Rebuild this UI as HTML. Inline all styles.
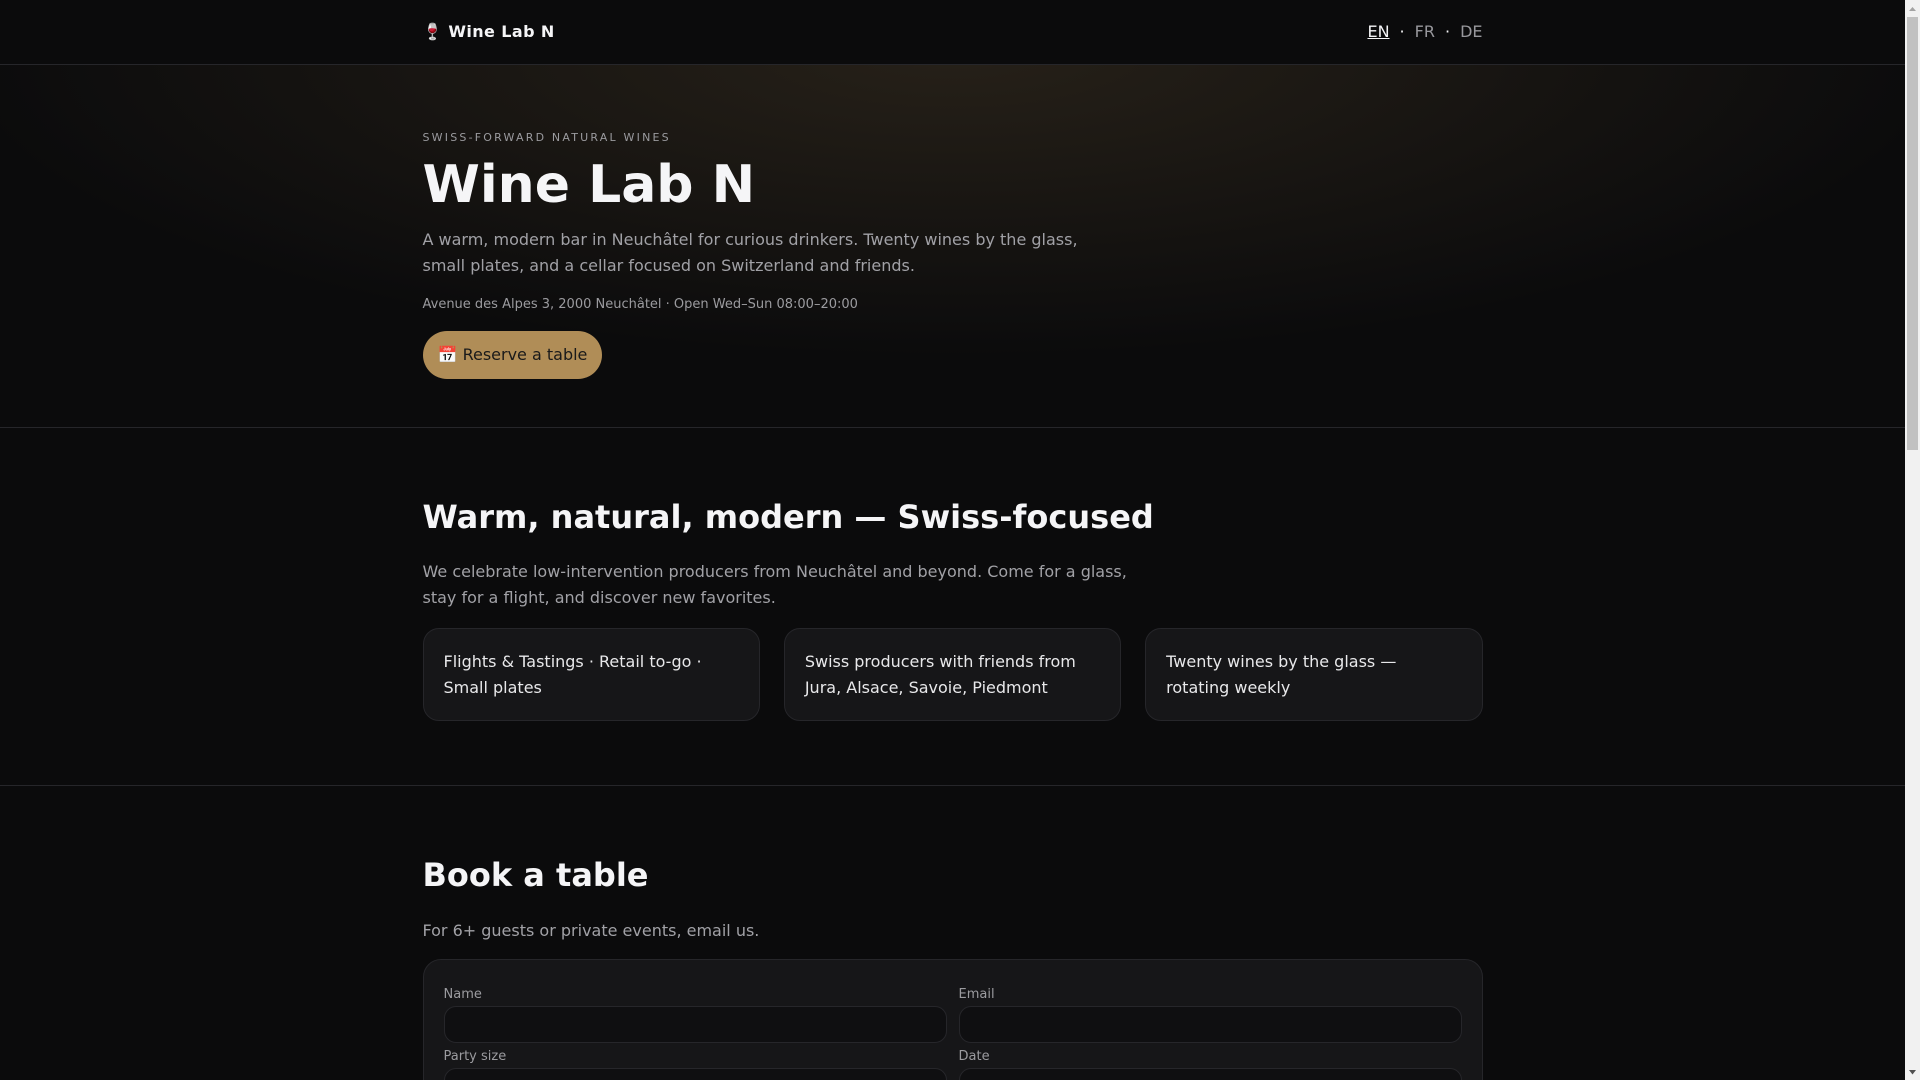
<!DOCTYPE html>
<html lang="en">
<head>
<meta charset="utf-8">
<title>Wine Lab N</title>
<style>
*{box-sizing:border-box}
html,body{margin:0;padding:0;width:1920px;height:1080px;overflow:hidden}
body{background:#0b0b0c;color:#f5f5f7;font-family:"DejaVu Sans",sans-serif;font-size:16px;line-height:1.6;position:relative}
#page{position:absolute;left:0;top:0;width:1905px;height:1080px;overflow:hidden}
.wrap{width:1060px;margin:0 auto;position:relative}
a{color:inherit;text-decoration:none}
header{height:65px;border-bottom:1px solid #26262a;background:#0b0b0c}
header .wrap{height:64px;display:flex;align-items:center;justify-content:space-between}
.brand{font-weight:700;letter-spacing:.4px;font-size:16px;display:flex;gap:5.5px;align-items:center}
.lang{display:flex;gap:10px;font-size:16px;color:#98989d}
.lang .on{color:#f5f5f7;text-decoration:underline}
.lang .dot{color:#f5f5f7}
.hero{height:363px;border-bottom:1px solid #26262a;background:radial-gradient(1000px 310px at 50% -5%,rgba(176,141,87,.17),rgba(176,141,87,0) 100%)}
.eyebrow{position:absolute;top:64px;left:0;font-size:11px;letter-spacing:.2em;color:#9b9b9f;line-height:18px}
h1{position:absolute;top:91px;left:0;margin:0;font-size:52px;line-height:58px;font-weight:700}
.lede{position:absolute;top:162px;left:0;margin:0;width:680px;color:#a1a1a6;font-size:16px;line-height:25.6px}
.addr{position:absolute;top:230px;left:0;margin:0;font-size:13px;line-height:20px;color:#9b9b9f}
.btn{position:absolute;top:266px;left:0;height:48px;width:179px;border-radius:24px;background:#b08d57;color:#1a1a1a;display:flex;align-items:center;justify-content:center;font-size:16px;white-space:pre;padding-left:1px}
section{border-bottom:1px solid #26262a}
h2{margin:0;font-size:32px;line-height:48px;font-weight:700;position:relative;top:1px}
section p{margin:0;color:#a1a1a6;line-height:25.6px}
.s1{height:358px;padding-top:64px}
.s1 p{margin-top:19px;width:720px}
.cards{display:grid;grid-template-columns:repeat(3,1fr);gap:24px;margin-top:18px}
.card{background:#161618;border:1px solid #26262a;border-radius:16px;padding:20px;height:93px;color:#e8e8ea;line-height:25.6px}
.s2{padding-top:64px;border-bottom:0}
.s2 p{margin-top:20px}
.form{margin-top:15px;background:#161618;border:1px solid #26262a;border-radius:18px;padding:24px 20px 20px;height:400px;display:grid;grid-template-columns:1fr 1fr;column-gap:12px;grid-auto-rows:62.5px}
.form label{display:block;font-size:13px;line-height:20px;color:#9b9b9f;position:relative;top:1px}
.form .in{display:block;height:37px;margin-top:2px;background:#0f0f11;border:1px solid #26262a;border-radius:12px}
#sb{position:absolute;left:1905px;top:0;width:15px;height:1080px;background:#f1f1f1}
#sb .thumb{position:absolute;left:2px;top:17px;width:11px;height:433px;background:#c1c1c1}
#sb svg{position:absolute;left:0;width:15px;height:15px}
</style>
</head>
<body>
<div id="page">
<header><div class="wrap">
  <a class="brand" href="#"><span>🍷</span><span>Wine Lab N</span></a>
  <nav class="lang"><a class="on" href="#">EN</a><span class="dot">·</span><a href="#">FR</a><span class="dot">·</span><a href="#">DE</a></nav>
</div></header>
<div class="hero"><div class="wrap">
  <div class="eyebrow">SWISS-FORWARD NATURAL WINES</div>
  <h1>Wine Lab N</h1>
  <p class="lede">A warm, modern bar in Neuchâtel for curious drinkers. Twenty wines by the glass, small plates, and a cellar focused on Switzerland and friends.</p>
  <p class="addr">Avenue des Alpes 3, 2000 Neuchâtel · Open Wed–Sun 08:00–20:00</p>
  <a class="btn" href="#">📅 Reserve a table</a>
</div></div>
<section class="s1"><div class="wrap">
  <h2>Warm, natural, modern — Swiss-focused</h2>
  <p>We celebrate low-intervention producers from Neuchâtel and beyond. Come for a glass, stay for a flight, and discover new favorites.</p>
  <div class="cards">
    <div class="card">Flights &amp; Tastings · Retail to-go · Small plates</div>
    <div class="card">Swiss producers with friends from Jura, Alsace, Savoie, Piedmont</div>
    <div class="card">Twenty wines by the glass — rotating weekly</div>
  </div>
</div></section>
<section class="s2"><div class="wrap">
  <h2>Book a table</h2>
  <p>For 6+ guests or private events, email us.</p>
  <div class="form">
    <div><label>Name</label><span class="in"></span></div>
    <div><label>Email</label><span class="in"></span></div>
    <div><label>Party size</label><span class="in"></span></div>
    <div><label>Date</label><span class="in"></span></div>
  </div>
</div></section>
</div>
<div id="sb">
  <svg style="top:2px" viewBox="0 0 15 15"><path d="M7.5 5 L11 9 L4 9 Z" fill="#a3a3a3"/></svg>
  <div class="thumb"></div>
  <svg style="top:1065px" viewBox="0 0 15 15"><path d="M4 5 L11 5 L7.5 9.5 Z" fill="#505050"/></svg>
</div>
</body>
</html>
